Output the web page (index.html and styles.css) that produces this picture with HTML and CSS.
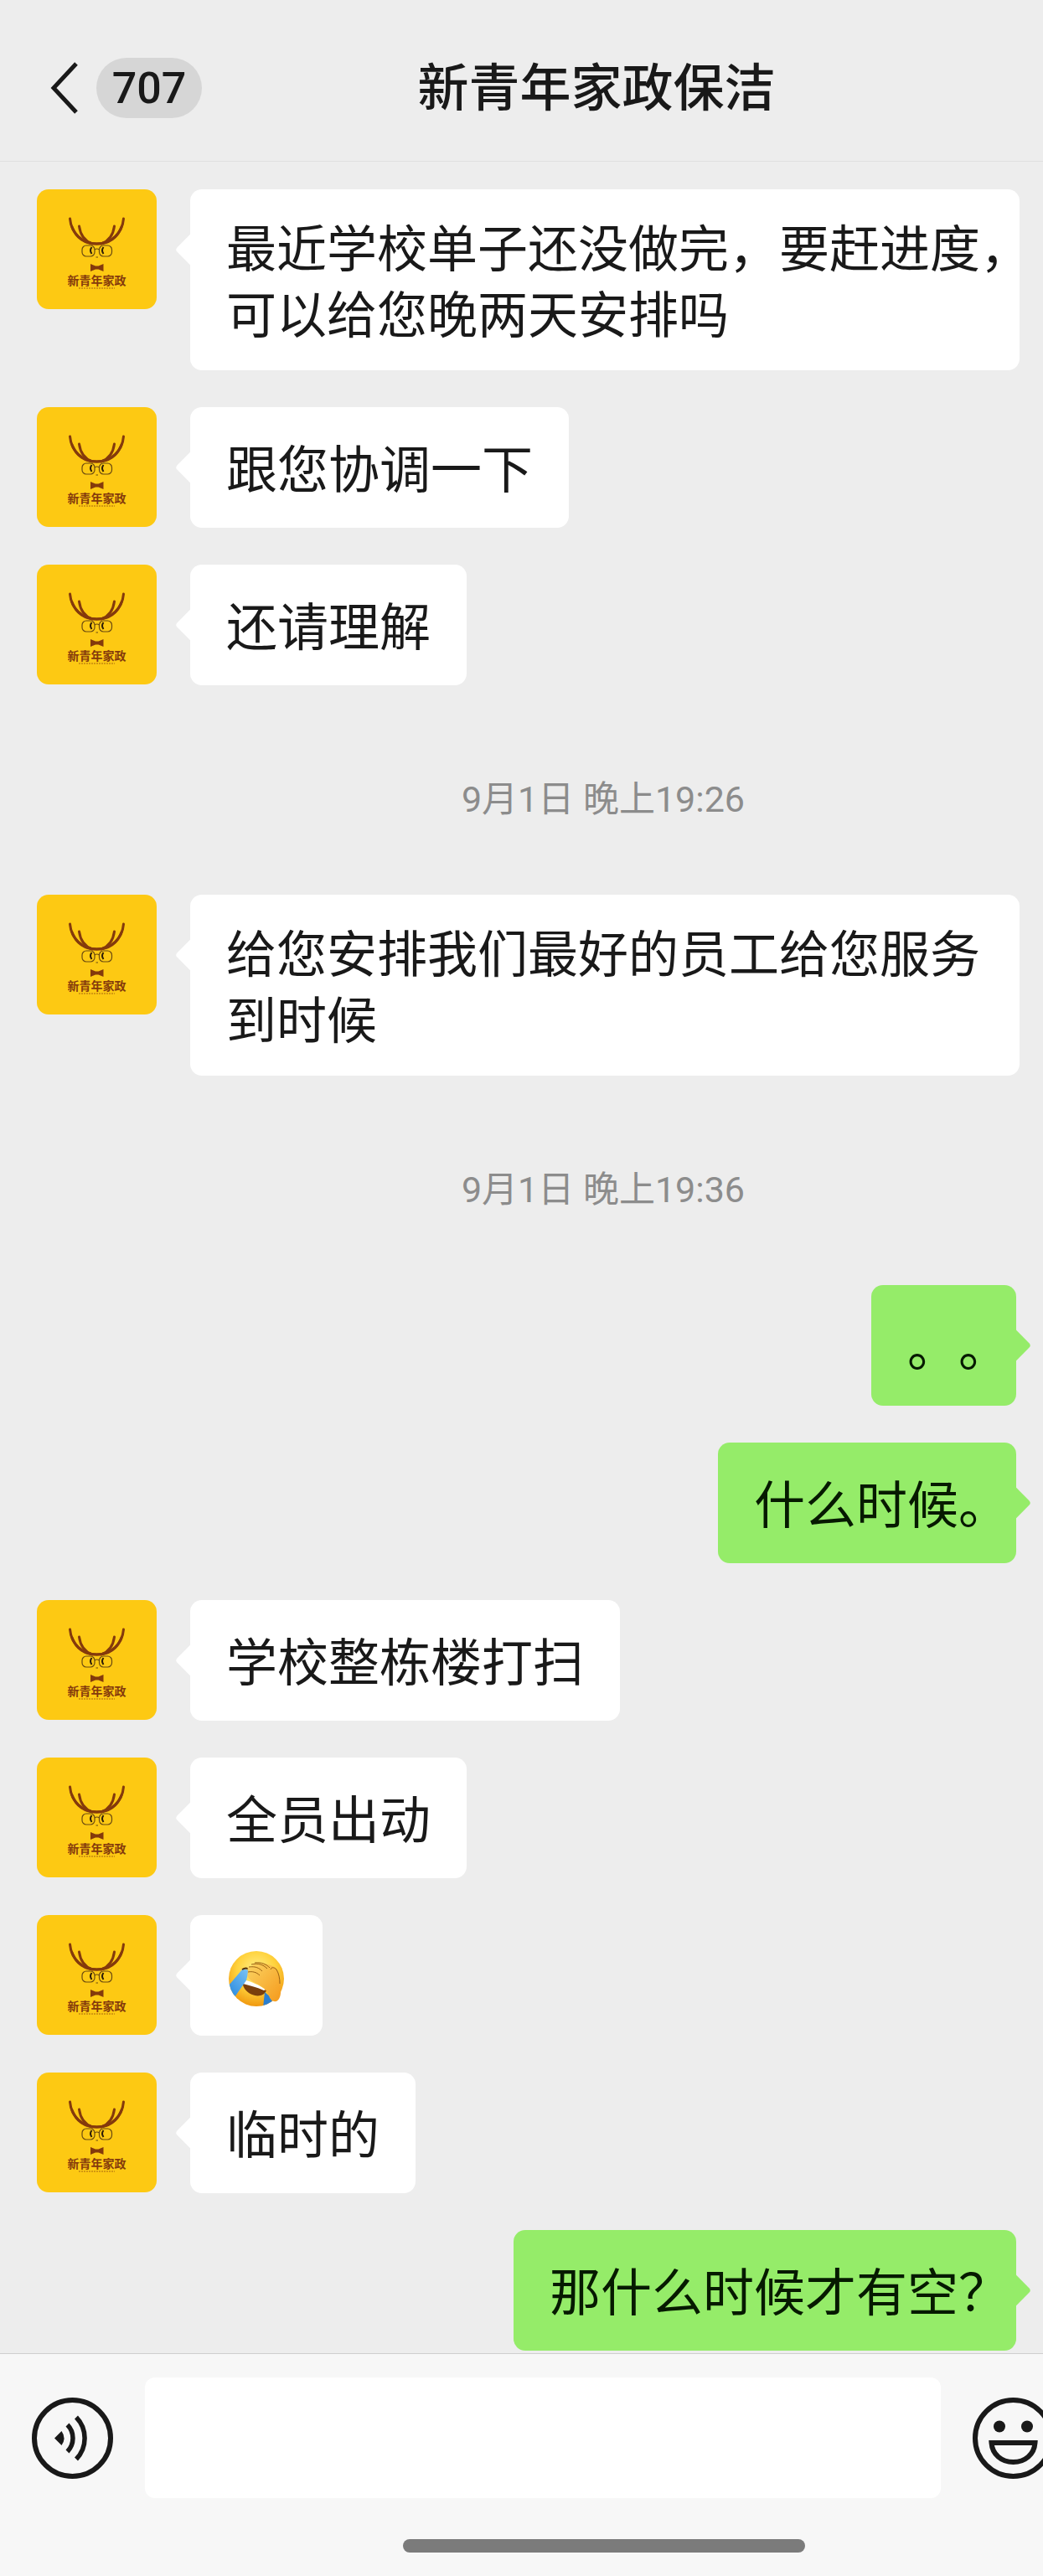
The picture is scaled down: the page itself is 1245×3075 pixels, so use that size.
FILE: index.html
```html
<!DOCTYPE html>
<html lang="zh-CN">
<head>
  <meta charset="UTF-8">
  <meta name="viewport" content="width=device-width, initial-scale=1">
  <title>新青年家政保洁</title>
  <link rel="stylesheet" href="styles.css">
</head>
<body>
  <!-- shared avatar drawing -->
  <svg class="defs" width="0" height="0" aria-hidden="true">
    <symbol id="logo" viewBox="0 0 143 143">
      <rect width="143" height="143" fill="#fdc913"/>
      <g fill="none" stroke="#843a0c" stroke-linecap="round">
        <path d="M39.500 35C41 52 54 65 71.500 65S102 52 103.500 35" stroke-width="3"/>
        <path d="M50.500 44C52 55 58 62 66 65M92.500 44C91 55 85 62 77 65" stroke-width="3"/>
        <path d="M42 45C47 58 57 65 71.500 65S96 58 101 45" stroke-width="3"/>
      </g>
      <g fill="none" stroke="#6b4a10" stroke-width="1.200">
        <rect x="54" y="67" width="15" height="13" rx="5"/>
        <rect x="74.500" y="67" width="15" height="13" rx="5"/>
        <path d="M69 72q2.700-2 5.500 0M70.500 81h2.500"/>
      </g>
      <path d="M65.500 69q-3 4 0 8M79.500 69q-3 4 0 8" fill="none" stroke="#2c1c08" stroke-width="2"/>
      <path d="M64 89l6 2.500h3.500l6-2.500v9l-6-2.500H70L64 98z" fill="#843a0c"/>
      <text class="logo-text" x="71.500" y="114" text-anchor="middle">新青年家政</text>
      <path d="M50 118h43" stroke="#a8660f" stroke-width="1" stroke-dasharray="2 1"/>
    </symbol>
  </svg>

  <header class="topbar">
    <button class="back" type="button" aria-label="返回">
      <svg width="34" height="62" viewBox="0 0 34 62" aria-hidden="true">
        <path d="M31 2L4 31l27 29" fill="none" stroke="#191919" stroke-width="5"/>
      </svg>
      <span class="unread">707</span>
    </button>
    <h1 class="title">新青年家政保洁</h1>
  </header>

  <main class="chat">
    <div class="row">
      <svg class="avatar" aria-hidden="true"><use href="#logo"/></svg>
      <p class="bubble long">最近学校单子还没做完，要赶进度，<br>可以给您晚两天安排吗</p>
    </div>
    <div class="row">
      <svg class="avatar" aria-hidden="true"><use href="#logo"/></svg>
      <p class="bubble">跟您协调一下</p>
    </div>
    <div class="row">
      <svg class="avatar" aria-hidden="true"><use href="#logo"/></svg>
      <p class="bubble">还请理解</p>
    </div>

    <time class="time">9月1日 晚上19:26</time>

    <div class="row">
      <svg class="avatar" aria-hidden="true"><use href="#logo"/></svg>
      <p class="bubble long">给您安排我们最好的员工给您服务<br>到时候</p>
    </div>

    <time class="time">9月1日 晚上19:36</time>

    <div class="row mine">
      <p class="bubble">。。</p>
    </div>
    <div class="row mine">
      <p class="bubble">什么时候。</p>
    </div>
    <div class="row">
      <svg class="avatar" aria-hidden="true"><use href="#logo"/></svg>
      <p class="bubble">学校整栋楼打扫</p>
    </div>
    <div class="row">
      <svg class="avatar" aria-hidden="true"><use href="#logo"/></svg>
      <p class="bubble">全员出动</p>
    </div>
    <div class="row">
      <svg class="avatar" aria-hidden="true"><use href="#logo"/></svg>
      <div class="bubble">
        <svg class="emoji" viewBox="0 0 68 68" role="img" aria-label="捂脸">
          <defs>
            <radialGradient id="face" cx="50%" cy="35%" r="65%">
              <stop offset="0" stop-color="#fff08a"/>
              <stop offset="0.550" stop-color="#ffd23c"/>
              <stop offset="1" stop-color="#f0980f"/>
            </radialGradient>
            <linearGradient id="hand" x1="0" y1="0" x2="1" y2="1">
              <stop offset="0" stop-color="#fbd463"/>
              <stop offset="1" stop-color="#f59a1c"/>
            </linearGradient>
            <linearGradient id="tear" x1="1" y1="0" x2="0" y2="1">
              <stop offset="0" stop-color="#7cc4f5"/>
              <stop offset="1" stop-color="#1f82dc"/>
            </linearGradient>
            <clipPath id="round"><circle cx="34" cy="34" r="33"/></clipPath>
          </defs>
          <circle cx="34" cy="34" r="33" fill="url(#face)"/>
          <g clip-path="url(#round)">
            <path d="M17 35c8 4 18 7 29 13-2 6-10 8-17 5-8-3-12-10-12-18z" fill="#7a3f0d"/>
            <path d="M17 35l3 0c8 3 17 6 25 12l-2 1c-9-4-18-6-25-8z" fill="#fff"/>
            <path d="M18 22l7 2L22 36 8 56-4 48z" fill="url(#tear)"/>
            <path d="M44 50l8 7 2 12H42z" fill="#2b7fd0"/>
          </g>
          <path d="M17 23q5-3 8 0" fill="none" stroke="#4a2a0c" stroke-width="2"/>
          <path d="M24 24c-2-3 2-5 5-4 0-4 6-6 12-4 6 0 12 2 16 5 4 3 6 13 6 22 1 10-1 16-5 18-5 1-8-3-9-7-2-6-6-9-11-12-6-3-12-6-14-10-1-3 0-6 0-8z" fill="url(#hand)"/>
          <path d="M25 20c8-1 12 1 16 5M28 17c8-2 14 0 19 5M32 15c9-1 14 2 18 6M24 26c5-1 10 0 14 4M51 23c1-3 4-3 7 0 3 5 4 11 4 17" fill="none" stroke="#9a6112" stroke-width="1"/>
        </svg>
      </div>
    </div>
    <div class="row">
      <svg class="avatar" aria-hidden="true"><use href="#logo"/></svg>
      <p class="bubble">临时的</p>
    </div>
    <div class="row mine">
      <p class="bubble">那什么时候才有空？</p>
    </div>
  </main>

  <footer class="bottom">
    <form class="compose">
      <button class="tool" type="button" aria-label="语音">
        <svg viewBox="0 0 97 97" aria-hidden="true">
          <circle cx="48.500" cy="48.500" r="45.500" fill="none" stroke="#191919" stroke-width="6"/>
          <path d="M27 48.500l8.500-8.500q6 8.500 0 17z" fill="#191919"/>
          <path d="M42.500 32.500a23 23 0 0 1 0 32M53 23.500a36 36 0 0 1 0 50" fill="none" stroke="#191919" stroke-width="5.500"/>
        </svg>
      </button>
      <input class="message" type="text" aria-label="消息">
      <button class="tool smile" type="button" aria-label="表情">
        <svg viewBox="0 0 97 97" aria-hidden="true">
          <circle cx="48.500" cy="48.500" r="45.500" fill="none" stroke="#191919" stroke-width="6"/>
          <circle cx="32" cy="34.500" r="7" fill="#191919"/>
          <circle cx="65" cy="34.500" r="7" fill="#191919"/>
          <path d="M22.500 54h52c-1 14-12 23-26 23s-25-9-26-23z" fill="none" stroke="#191919" stroke-width="6"/>
        </svg>
      </button>
    </form>
    <div class="home"></div>
  </footer>
</body>
</html>
```

FILE: styles.css
```css
* {
  box-sizing: border-box;
}

body {
  margin: 0;
  min-height: 100vh;
  display: flex;
  flex-direction: column;
  background-color: #ededed;
  color: #191919;
  font-family: Roboto, "Noto Sans CJK SC", sans-serif;
  text-spacing-trim: space-all;
}

button {
  padding: 0;
  border: 0;
  background: none;
  color: inherit;
  font-family: inherit;
  cursor: pointer;
}

.defs {
  display: none;
}

/* header */
.topbar {
  display: flex;
  align-items: center;
  padding: 69px 62px 51px 60px;
  border-bottom: 1px solid #e0e0e0;
}

.back {
  display: flex;
  align-items: center;
  gap: 21px;
}

.unread {
  width: 126px;
  height: 72px;
  border-radius: 36px;
  background-color: #d6d6d6;
  font-size: 52px;
  font-weight: 500;
  line-height: 74px;
  text-align: center;
}

.title {
  flex: 1;
  margin: 0;
  font-size: 61px;
  font-weight: 500;
  line-height: 74px;
  text-align: center;
  height: 72px;
}

/* messages */
.chat {
  flex: 1;
  display: flex;
  flex-direction: column;
  gap: 44px;
  padding: 33px 28px 3px 44px;
}

.row {
  display: flex;
  align-items: flex-start;
  gap: 40px;
}

.mine {
  justify-content: flex-end;
  padding-right: 4px;
}

.avatar {
  flex: none;
  width: 143px;
  height: 143px;
  border-radius: 14px;
}

.logo-text {
  font-family: "Noto Sans CJK SC", sans-serif;
  font-size: 14px;
  font-weight: 700;
  fill: #843a0c;
}

.bubble {
  position: relative;
  max-width: 990px;
  min-height: 144px;
  margin: 0;
  padding: 33px 43px 25px;
  border-radius: 14px;
  background-color: #fff;
  font-size: 61px;
  line-height: 79px;
  white-space: nowrap;
  align-content: center;
}

.long {
  width: 990px;
  font-size: 60px;
}

.bubble::before {
  content: "";
  position: absolute;
  top: 57px;
  left: -12px;
  width: 30px;
  height: 30px;
  border-radius: 4px;
  background-color: inherit;
  transform: rotate(45deg);
}

/* full-width punctuation at the end already leaves room on the right */
.mine .bubble {
  padding-right: 8px;
  background-color: #95ec69;
  color: #061a00;
}

.mine .bubble::before {
  left: auto;
  right: -12px;
}

.emoji {
  display: block;
  width: 72px;
  height: 68px;
}

.time {
  padding: 62px 0 40px 179px;
  color: #8c8c8c;
  font-size: 43px;
  line-height: 60px;
  text-align: center;
}

/* input bar */
.bottom {
  overflow: hidden;
  padding-bottom: 28px;
  border-top: 1px solid #cfcfcf;
  background-color: #f7f7f7;
}

.compose {
  display: flex;
  align-items: center;
  gap: 38px;
  padding: 28px 0 0 38px;
}

.tool {
  flex: none;
  width: 97px;
  height: 97px;
}

.tool svg {
  display: block;
}

.smile {
  margin-right: -13px;
}

.message {
  flex: 1;
  min-width: 0;
  height: 144px;
  padding: 0 30px;
  border: 0;
  border-radius: 12px;
  background-color: #fff;
  font-size: 60px;
}

/* same centre line as the chat timestamps */
.home {
  width: 480px;
  height: 16px;
  margin: 49px calc(50% - 338px) 0 auto;
  border-radius: 8px;
  background-color: #7b7b7b;
}
```
